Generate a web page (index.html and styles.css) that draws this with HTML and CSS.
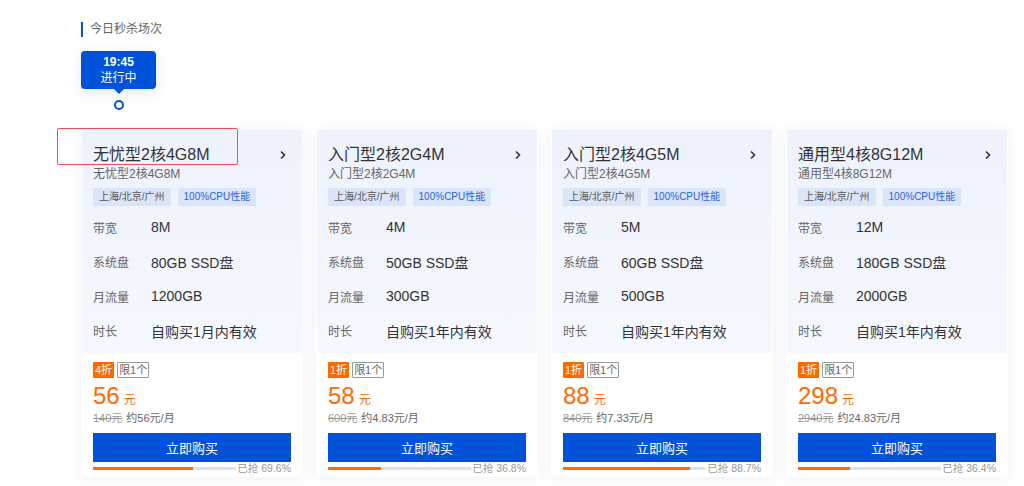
FILE: index.html
```html
<!DOCTYPE html>
<html lang="zh-CN">
<head>
<meta charset="utf-8">
<title>今日秒杀场次</title>
<link rel="stylesheet" href="styles.css">
</head>
<body>
<div class="page">
  <div class="section-title">今日秒杀场次</div>
  <div class="session">
    <div class="session-tip">
      <div class="session-time">19:45</div>
      <div class="session-state">进行中</div>
    </div>
    <div class="session-arrow"></div>
    <div class="session-dot"></div>
  </div>

  <div class="cards">
    <div class="card">
      <div class="card-top">
        <div class="card-head">
          <div class="card-title">无忧型2核4G8M</div>
          <svg class="chev" width="8" height="10" viewBox="0 0 8 10"><polyline points="2,1.5 5.5,5 2,8.5" fill="none" stroke="#333" stroke-width="1.6"/></svg>
        </div>
        <div class="card-sub">无忧型2核4G8M</div>
        <div class="tags"><span class="tag">上海/北京/广州</span><span class="tag tag-blue">100%CPU性能</span></div>
        <div class="specs">
          <div class="spec"><span class="spec-k">带宽</span><span class="spec-v">8M</span></div>
          <div class="spec"><span class="spec-k">系统盘</span><span class="spec-v">80GB SSD盘</span></div>
          <div class="spec"><span class="spec-k">月流量</span><span class="spec-v">1200GB</span></div>
          <div class="spec"><span class="spec-k">时长</span><span class="spec-v">自购买1月内有效</span></div>
        </div>
      </div>
      <div class="card-bottom">
        <div class="badges"><span class="badge-off">4折</span><span class="badge-limit">限1个</span></div>
        <div class="price"><span class="price-num">56</span><span class="price-unit">元</span></div>
        <div class="old"><span class="old-price">140元</span><span class="month">约56元/月</span></div>
        <button class="buy">立即购买</button>
        <div class="progress"><div class="track"><div class="fill" style="width:69.6%"></div></div><span class="sold">已抢 69.6%</span></div>
      </div>
    </div>

    <div class="card">
      <div class="card-top">
        <div class="card-head">
          <div class="card-title">入门型2核2G4M</div>
          <svg class="chev" width="8" height="10" viewBox="0 0 8 10"><polyline points="2,1.5 5.5,5 2,8.5" fill="none" stroke="#333" stroke-width="1.6"/></svg>
        </div>
        <div class="card-sub">入门型2核2G4M</div>
        <div class="tags"><span class="tag">上海/北京/广州</span><span class="tag tag-blue">100%CPU性能</span></div>
        <div class="specs">
          <div class="spec"><span class="spec-k">带宽</span><span class="spec-v">4M</span></div>
          <div class="spec"><span class="spec-k">系统盘</span><span class="spec-v">50GB SSD盘</span></div>
          <div class="spec"><span class="spec-k">月流量</span><span class="spec-v">300GB</span></div>
          <div class="spec"><span class="spec-k">时长</span><span class="spec-v">自购买1年内有效</span></div>
        </div>
      </div>
      <div class="card-bottom">
        <div class="badges"><span class="badge-off">1折</span><span class="badge-limit">限1个</span></div>
        <div class="price"><span class="price-num">58</span><span class="price-unit">元</span></div>
        <div class="old"><span class="old-price">600元</span><span class="month">约4.83元/月</span></div>
        <button class="buy">立即购买</button>
        <div class="progress"><div class="track"><div class="fill" style="width:36.8%"></div></div><span class="sold">已抢 36.8%</span></div>
      </div>
    </div>

    <div class="card">
      <div class="card-top">
        <div class="card-head">
          <div class="card-title">入门型2核4G5M</div>
          <svg class="chev" width="8" height="10" viewBox="0 0 8 10"><polyline points="2,1.5 5.5,5 2,8.5" fill="none" stroke="#333" stroke-width="1.6"/></svg>
        </div>
        <div class="card-sub">入门型2核4G5M</div>
        <div class="tags"><span class="tag">上海/北京/广州</span><span class="tag tag-blue">100%CPU性能</span></div>
        <div class="specs">
          <div class="spec"><span class="spec-k">带宽</span><span class="spec-v">5M</span></div>
          <div class="spec"><span class="spec-k">系统盘</span><span class="spec-v">60GB SSD盘</span></div>
          <div class="spec"><span class="spec-k">月流量</span><span class="spec-v">500GB</span></div>
          <div class="spec"><span class="spec-k">时长</span><span class="spec-v">自购买1年内有效</span></div>
        </div>
      </div>
      <div class="card-bottom">
        <div class="badges"><span class="badge-off">1折</span><span class="badge-limit">限1个</span></div>
        <div class="price"><span class="price-num">88</span><span class="price-unit">元</span></div>
        <div class="old"><span class="old-price">840元</span><span class="month">约7.33元/月</span></div>
        <button class="buy">立即购买</button>
        <div class="progress"><div class="track"><div class="fill" style="width:88.7%"></div></div><span class="sold">已抢 88.7%</span></div>
      </div>
    </div>

    <div class="card">
      <div class="card-top">
        <div class="card-head">
          <div class="card-title">通用型4核8G12M</div>
          <svg class="chev" width="8" height="10" viewBox="0 0 8 10"><polyline points="2,1.5 5.5,5 2,8.5" fill="none" stroke="#333" stroke-width="1.6"/></svg>
        </div>
        <div class="card-sub">通用型4核8G12M</div>
        <div class="tags"><span class="tag">上海/北京/广州</span><span class="tag tag-blue">100%CPU性能</span></div>
        <div class="specs">
          <div class="spec"><span class="spec-k">带宽</span><span class="spec-v">12M</span></div>
          <div class="spec"><span class="spec-k">系统盘</span><span class="spec-v">180GB SSD盘</span></div>
          <div class="spec"><span class="spec-k">月流量</span><span class="spec-v">2000GB</span></div>
          <div class="spec"><span class="spec-k">时长</span><span class="spec-v">自购买1年内有效</span></div>
        </div>
      </div>
      <div class="card-bottom">
        <div class="badges"><span class="badge-off">1折</span><span class="badge-limit">限1个</span></div>
        <div class="price"><span class="price-num">298</span><span class="price-unit">元</span></div>
        <div class="old"><span class="old-price">2940元</span><span class="month">约24.83元/月</span></div>
        <button class="buy">立即购买</button>
        <div class="progress"><div class="track"><div class="fill" style="width:36.4%"></div></div><span class="sold">已抢 36.4%</span></div>
      </div>
    </div>
  </div>

  <div class="highlight"></div>
</div>
</body>
</html>
```

FILE: styles.css
```css
* { box-sizing: border-box; }
html, body { margin: 0; padding: 0; background: #fff; }
body {
  font-family: "Liberation Sans", "Noto Sans CJK SC", sans-serif;
  color: #333;
  width: 1024px;
  height: 486px;
  overflow: hidden;
}
.page {
  position: relative;
  padding: 22px 0 0 81px;
}
.section-title {
  border-left: 2px solid #0052d9;
  padding-left: 7px;
  height: 15px;
  line-height: 15px;
  font-size: 12px;
  color: #666;
}
.session {
  margin-top: 14px;
  width: 75px;
  display: flex;
  flex-direction: column;
  align-items: center;
}
.session-tip {
  width: 75px;
  height: 38px;
  padding: 3px 0;
  background: #0052d9;
  border-radius: 4px;
  color: #fff;
  text-align: center;
  font-size: 12px;
  line-height: 16px;
  box-shadow: 0 4px 14px rgba(0, 82, 217, 0.12);
}
.session-time { font-weight: bold; }
.session-arrow {
  width: 0;
  height: 0;
  border-left: 5px solid transparent;
  border-right: 5px solid transparent;
  border-top: 5px solid #0052d9;
}
.session-dot {
  margin-top: 6px;
  width: 10px;
  height: 10px;
  border: 2px solid #0052d9;
  border-radius: 50%;
  background: #fff;
}
.cards {
  margin-top: 20px;
  display: flex;
  gap: 13px;
}
.card {
  width: 222px;
  background: #fff;
  box-shadow: 0 2px 14px rgba(30, 60, 130, 0.07);
}
.card-top {
  margin: 0 1px;
  padding: 14px 11px 5px 11px;
  background: linear-gradient(180deg, #edf2fd 0%, #f6f8fe 100%);
}
.card-head {
  display: flex;
  align-items: center;
  justify-content: space-between;
  height: 22px;
}
.card-title {
  font-size: 16px;
  line-height: 22px;
  color: #333;
}
.chev { margin-right: 4px; }
.card-sub {
  font-size: 12px;
  line-height: 16px;
  color: #666;
}
.tags {
  margin-top: 6px;
  display: flex;
  gap: 7px;
}
.tag {
  height: 18px;
  line-height: 18px;
  padding: 0 6px;
  font-size: 10px;
  color: #555;
  background: #dae5fa;
  border-radius: 1px;
}
.tag-blue { color: #2b63d9; }
.specs { margin-top: 4px; }
.spec {
  display: flex;
  align-items: center;
  height: 34.5px;
}
.spec-k {
  width: 58px;
  font-size: 12px;
  color: #666;
}
.spec-v {
  font-size: 14px;
  color: #333;
}
.card-bottom {
  padding: 9px 12px 3px 12px;
}
.badges {
  display: flex;
  gap: 3px;
  height: 16px;
}
.badge-off {
  height: 16px;
  line-height: 16px;
  padding: 0 2px;
  background: #ff6a00;
  color: #fff;
  font-size: 11px;
  border-radius: 1px;
}
.badge-limit {
  height: 16px;
  line-height: 14px;
  padding: 0 1px;
  border: 1px solid #999;
  color: #666;
  font-size: 11px;
  border-radius: 1px;
}
.price {
  margin-top: 4px;
  height: 28px;
  line-height: 28px;
  color: #ff6a00;
  white-space: nowrap;
}
.price-num {
  font-size: 24px;
}
.price-unit {
  font-size: 12px;
  margin-left: 4px;
}
.old {
  height: 16px;
  line-height: 16px;
  font-size: 11px;
  white-space: nowrap;
}
.old-price {
  color: #999;
  text-decoration: line-through;
  margin-right: 4px;
}
.month { color: #666; }
.buy {
  display: block;
  margin-top: 7px;
  width: 100%;
  height: 29px;
  border: 0;
  padding: 0;
  background: #0052d9;
  color: #fff;
  font-family: inherit;
  font-size: 13px;
  cursor: pointer;
}
.progress {
  display: flex;
  align-items: center;
  justify-content: space-between;
  height: 12px;
}
.track {
  width: 143px;
  flex: none;
  height: 3px;
  background: #dde2ec;
}
.fill {
  height: 3px;
  background: #ff6a00;
}
.sold {
  font-size: 10.5px;
  color: #999;
  line-height: 12px;
  white-space: nowrap;
}
.highlight {
  position: absolute;
  left: 57px;
  top: 128px;
  width: 181px;
  height: 37px;
  border: 1.5px solid #e8505b;
  border-radius: 2px;
  pointer-events: none;
}
```
